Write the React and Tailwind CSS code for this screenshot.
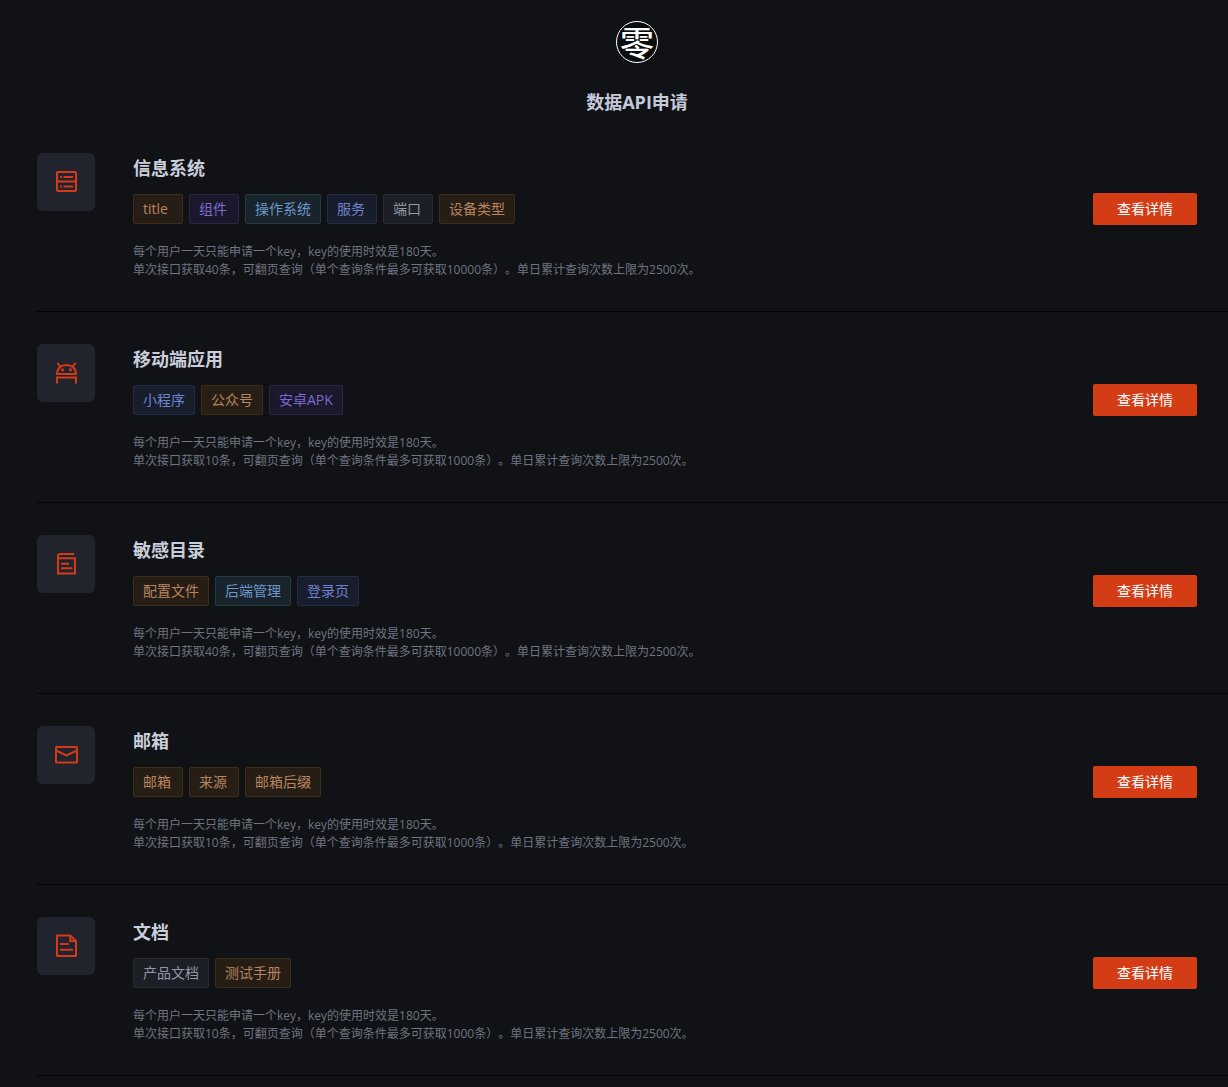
import React from "react";

const TAG_COLORS = {
  orange: "bg-[#261d14] border-[#3d2e1b] text-[#b98560]",
  purple: "bg-[#1b182b] border-[#2b2447] text-[#7c6bd0]",
  cyan: "bg-[#19232b] border-[#213d43] text-[#6c97cb]",
  blue: "bg-[#181d2b] border-[#222c4a] text-[#6d83cf]",
  gray: "bg-[#1d1f27] border-[#272a33] text-[#9499a6]",
};

const ICONS = {
  server: (
    <>
      <rect x="3" y="2" width="19" height="19" rx="0.8" />
      <path d="M3 11.5h19M9.5 7H19M9.5 16.5H19M6 7h2M6 16.5h2" />
    </>
  ),
  android: (
    <>
      <path d="M3 13c0-5.4 4-9 9.5-9s9.5 3.6 9.5 9zM6.4 5.8 3.4 1.8M18.6 5.8l3-4" />
      <path d="M3 22.5V16.5h19v6" />
      <path d="M8.5 7.6v2.6M16.5 7.6v2.6" strokeWidth="2.6" />
    </>
  ),
  book: (
    <>
      <path d="M20 2H6.3C4.8 2 4 2.8 4 4v17.5h17V6.2H4" />
      <path d="M7 11.7h8M7 16.3h11.5" />
    </>
  ),
  mail: (
    <>
      <rect x="2" y="4" width="21" height="15.5" rx="0.6" />
      <path d="m2 7.5 10.5 5L23 7.5" />
    </>
  ),
  doc: (
    <>
      <path d="M3 1.5h13.2L22 7v15H3z" strokeLinejoin="round" />
      <path d="M16.2 1.5V7H22M6 10h8.8M6 15.7h13" />
    </>
  ),
};

const LIST = [
  {
    title: "信息系统",
    icon: "server",
    tags: [
      ["title", "orange"],
      ["组件", "purple"],
      ["操作系统", "cyan"],
      ["服务", "blue"],
      ["端口", "gray"],
      ["设备类型", "orange"],
    ],
    size: 40,
    max: 10000,
  },
  {
    title: "移动端应用",
    icon: "android",
    tags: [
      ["小程序", "blue"],
      ["公众号", "orange"],
      ["安卓APK", "purple"],
    ],
    size: 10,
    max: 1000,
  },
  {
    title: "敏感目录",
    icon: "book",
    tags: [
      ["配置文件", "orange"],
      ["后端管理", "cyan"],
      ["登录页", "blue"],
    ],
    size: 40,
    max: 10000,
  },
  {
    title: "邮箱",
    icon: "mail",
    tags: [
      ["邮箱", "orange"],
      ["来源", "orange"],
      ["邮箱后缀", "orange"],
    ],
    size: 10,
    max: 1000,
  },
  {
    title: "文档",
    icon: "doc",
    tags: [
      ["产品文档", "gray"],
      ["测试手册", "orange"],
    ],
    size: 10,
    max: 1000,
  },
];

function Logo() {
  return (
    <div className="flex h-[42px] w-[42px] items-center justify-center rounded-full border border-white bg-[#0b0c0e] font-['Noto_Sans_CJK_SC',sans-serif] text-[34px] leading-[40px] font-medium text-white">
      零
    </div>
  );
}

function ApiRow({ title, icon, tags, size, max }) {
  return (
    <li className="flex items-start border-b border-[#040406] pt-8 pb-8 pr-10">
      {/* Icon */}
      <div className="flex h-[58px] w-[58px] shrink-0 items-center justify-center rounded-md bg-[#22242d]">
        <svg
          width="24"
          height="24"
          viewBox="0 0 24 24"
          fill="none"
          stroke="#d33a17"
          strokeWidth="2"
          aria-hidden="true"
        >
          {ICONS[icon]}
        </svg>
      </div>

      {/* Info */}
      <div className="ml-[38px] min-w-0 flex-1">
        <h2 className="text-lg leading-[30px] font-bold text-[#c9cedb]">{title}</h2>
        <ul className="mt-[11px] flex flex-wrap gap-[6px]">
          {tags.map(([name, color]) => (
            <li
              key={name}
              className={`h-[30px] min-w-[50px] rounded-xs border px-[9px] text-sm leading-7 ${TAG_COLORS[color]}`}
            >
              {name}
            </li>
          ))}
        </ul>
        <p className="mt-[19px] text-xs leading-[18px] text-[#6f7481] [text-spacing-trim:space-all]">
          每个用户一天只能申请一个key，key的使用时效是180天。
          <br />
          {`单次接口获取${size}条，可翻页查询（单个查询条件最多可获取${max}条）。单日累计查询次数上限为2500次。`}
        </p>
      </div>

      {/* Action */}
      <button
        type="button"
        className="mt-10 h-8 w-[104px] shrink-0 cursor-pointer rounded-xs bg-[#d43c15] text-sm text-white hover:bg-[#e04a22]"
      >
        查看详情
      </button>
    </li>
  );
}

export default function App() {
  return (
    <div className="min-h-screen overflow-hidden bg-[#111216] font-['Open_Sans','Noto_Sans_CJK_SC',sans-serif]">
      <main lang="zh-CN" className="-mr-[9px] ml-[37px]">
        <header className="flex flex-col items-center pt-[21px] pb-1">
          <Logo />
          <h1 className="mt-6 text-lg leading-[30px] font-bold text-[#c5cada]">数据API申请</h1>
        </header>
        <ul>
          {LIST.map((item) => (
            <ApiRow key={item.title} {...item} />
          ))}
        </ul>
      </main>
    </div>
  );
}
